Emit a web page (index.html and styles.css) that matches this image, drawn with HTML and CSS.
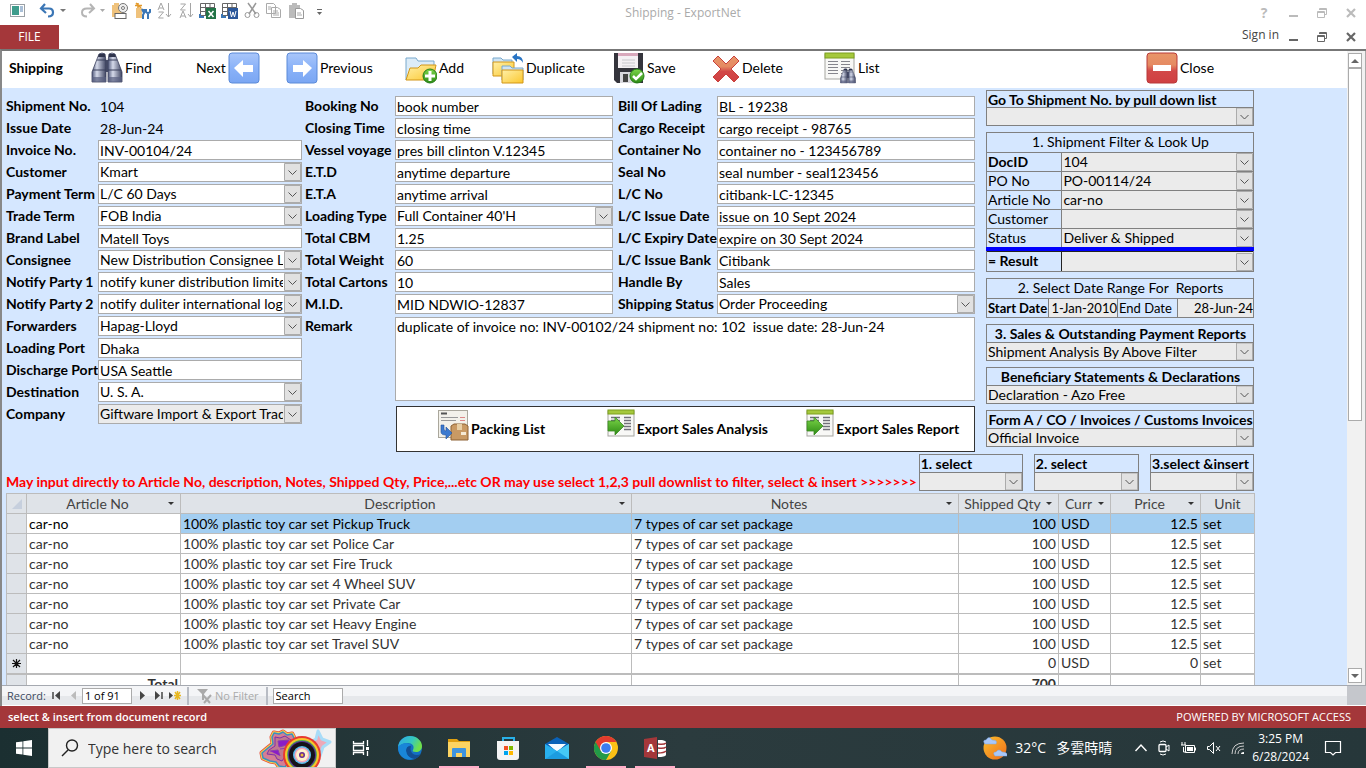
FILE: index.html
```html
<!DOCTYPE html>
<html lang="en">
<head>
<meta charset="utf-8">
<title>Shipping - ExportNet</title>
<link rel="stylesheet" href="styles.css">
</head>
<body>
<svg class="defs" aria-hidden="true">
  <defs>
    <linearGradient id="blue" x1="0" y1="0" x2="0" y2="1"><stop offset="0" stop-color="#a9c6fa"/><stop offset=".5" stop-color="#8ab2f8"/><stop offset="1" stop-color="#7aa6f3"/></linearGradient>
    <linearGradient id="red" x1="0" y1="0" x2="0" y2="1"><stop offset="0" stop-color="#e8966a"/><stop offset=".4" stop-color="#e58a62"/><stop offset=".6" stop-color="#d24848"/><stop offset="1" stop-color="#d04042"/></linearGradient>
    <linearGradient id="gold" x1="0" y1="0" x2="1" y2="1"><stop offset="0" stop-color="#fff0a8"/><stop offset="1" stop-color="#fbc72e"/></linearGradient>
    <linearGradient id="steel" x1="0" y1="0" x2="1" y2="0"><stop offset="0" stop-color="#50587a"/><stop offset=".35" stop-color="#d5daea"/><stop offset="1" stop-color="#3f4562"/></linearGradient>
    <linearGradient id="green" x1="0" y1="0" x2="0" y2="1"><stop offset="0" stop-color="#7dd64a"/><stop offset="1" stop-color="#2c8a14"/></linearGradient>
    <linearGradient id="sun" x1="0" y1="0" x2="1" y2="1"><stop offset="0" stop-color="#fbc02d"/><stop offset="1" stop-color="#ef6c1a"/></linearGradient>
    <linearGradient id="edge" x1="0" y1="0" x2="1" y2=".4"><stop offset="0" stop-color="#2fa8e8"/><stop offset=".6" stop-color="#35c8c0"/><stop offset="1" stop-color="#6fe04a"/></linearGradient>
    <symbol id="binoculars" viewBox="0 0 32 32">
      <rect x="13" y="8" width="6" height="12" fill="#4a506c"/>
      <path d="M8 2q3-2 6 0l1 7v21H1V20L6 7z" fill="url(#steel)" stroke="#3b405c" stroke-width=".8"/>
      <path d="M18 2q3-2 6 0l2 5 5 13v10H17V9z" fill="url(#steel)" stroke="#3b405c" stroke-width=".8"/>
      <path d="M8 2h6v3H7zM18 2h6l1 3h-7z" fill="#2f344c"/>
      <path d="M6 8h9M17 8h9M2 18h13M17 18h13" stroke="#3b405c"/>
      <path d="M1 25h14v5H1zM17 25h14v5H17z" fill="#596080" opacity=".7"/>
    </symbol>
    <symbol id="sheet" viewBox="0 0 32 32">
      <rect x="1" y="2" width="29" height="25" fill="#f8f8f6" stroke="#a5a5a0"/>
      <rect x="1" y="1" width="29" height="5" fill="#a5c83c" stroke="#7da01e"/>
      <path d="M4 9.500h10M4 12.500h10M4 15.500h10M4 18.500h10M4 21.500h10M17 9.500h9M17 12.500h9M17 15.500h9M17 18.500h9M17 21.500h9" stroke="#85858c"/>
    </symbol>
    <symbol id="export" viewBox="0 0 32 32">
      <rect x="3" y="2" width="26" height="25" fill="#f8f8f6" stroke="#a5a5a0"/>
      <rect x="3" y="1" width="26" height="4" fill="#a5c83c" stroke="#7da01e"/>
      <path d="M6 8.500h9M6 11.500h9M19 8.500h7M19 11.500h7M19 14.500h7M19 17.500h7M19 20.500h7" stroke="#70707a" stroke-width="1.500"/>
      <path d="M3 12h7V8l9 9-9 9v-4H3z" fill="url(#green)" stroke="#3a8a22" stroke-width=".8"/>
    </symbol>
    <symbol id="restore" viewBox="0 0 12 12"><path d="M3.500 3V1.500h7v6H9M1.500 4.500h7v6h-7zM1.500 5.500h7M3.500 2.500h7" fill="none" stroke="currentColor"/></symbol>
    <symbol id="cross" viewBox="0 0 12 12"><path d="M2 2l8 8M10 2l-8 8" stroke="currentColor" stroke-width="2.200"/></symbol>
  </defs>
</svg>

<header class="titlebar">
  <div class="quick">
    <svg width="17" height="22" viewBox="0 0 17 22"><rect x="1.500" y="4.500" width="14" height="12" fill="#fff" stroke="#9aa0a5"/><rect x="3" y="6" width="7" height="9" fill="#3f9c8c"/><path d="M11 7h3M11 9h3M11 11h3" stroke="#5580b0"/></svg>
    <svg class="q-undo" width="30" height="22" viewBox="0 0 30 22"><path d="M7 4L3 8.500l5 4.500M4 8.500h7q4 0 4 4t-5 4" fill="none" stroke="#3b76b5" stroke-width="2.200"/><path d="M22 9h6l-3 3z" fill="#777"/></svg>
    <svg class="q-redo" width="28" height="22" viewBox="0 0 28 22"><path d="M8 4l4 4.500L7 13M11 8.500H5q-5 0-5 4t5 4" transform="translate(1)" fill="none" stroke="#b5b5b5" stroke-width="2"/><path d="M19 9h5l-2.500 3z" fill="#aaa"/></svg>
    <svg width="22" height="22" viewBox="0 0 22 22"><path d="M3 3h5v3H3zM1 5h11v12H1z" fill="#efc27c"/><circle cx="12" cy="8" r="4.500" fill="#eee" stroke="#777"/><circle cx="12" cy="8" r="1.500" fill="#fff" stroke="#777"/><rect x="4" y="13.500" width="11" height="5" fill="#fff" stroke="#666"/></svg>
    <svg width="22" height="22" viewBox="0 0 22 22"><path d="M5 3v5M2 5.500h7M3 3l5 5" stroke="#e39a2c" stroke-width="1.500"/><rect x="3" y="8" width="6" height="10" fill="#efc27c"/><path d="M11 9v4l-1 2v4M9 9l2 4M13 9v3q2 2 4 0V9M15 13v6" fill="none" stroke="#3b76b5" stroke-width="2"/></svg>
    <svg width="22" height="22" viewBox="0 0 22 22"><path d="M3 10l3-7 3 7M4 8h4M3.500 12h5l-5 6h5M13.500 3v14M11 14l2.500 3 2.500-3" fill="none" stroke="#a5a5a5"/></svg>
    <svg width="22" height="22" viewBox="0 0 22 22"><path d="M3.500 4h5l-5 6h5M3 18l3-7 3 7M4 16h4M13.500 3v14M11 14l2.500 3 2.500-3" fill="none" stroke="#a5a5a5"/></svg>
    <svg width="22" height="22" viewBox="0 0 22 22"><path d="M1.500 3.500h14v12h-14zM2 7.500h14M6.500 4v11M11 4v11M2 11.500h13" fill="#fff" stroke="#666"/><rect x="7" y="8" width="10" height="11" fill="#217346"/><path d="M9.500 11l5 6M14.500 11l-5 6" stroke="#fff" stroke-width="1.500"/><path d="M1 14v3h4" fill="none" stroke="#3b76b5" stroke-width="2"/></svg>
    <svg width="22" height="22" viewBox="0 0 22 22"><path d="M1.500 3.500h14v12h-14zM2 7.500h14M6.500 4v11M11 4v11M2 11.500h13" fill="#fff" stroke="#666"/><rect x="7" y="8" width="10" height="11" fill="#2b579a"/><path d="M9 11l1.500 6 1.500-5 1.500 5 1.500-6" fill="none" stroke="#fff"/><path d="M1 14v3h4" fill="none" stroke="#3b76b5" stroke-width="2"/></svg>
    <svg width="22" height="22" viewBox="0 0 22 22"><path d="M5 3l8 11M13 3L6 14" stroke="#999" stroke-width="1.500"/><circle cx="4.500" cy="15" r="2.500" fill="none" stroke="#999"/><circle cx="13.500" cy="15" r="2.500" fill="none" stroke="#999"/></svg>
    <svg width="22" height="22" viewBox="0 0 22 22"><path d="M1.500 3.500h7l2 2v8h-9zM6.500 7.500h6l3 2v8h-9zM3 7h3M3 9h3M8 11h5M8 13h6M8 15h6" fill="#fff" stroke="#aaa"/></svg>
    <svg width="22" height="22" viewBox="0 0 22 22"><path d="M2 5h11v13H2zM5 3h5v3H5z" fill="#bbb"/><path d="M8.500 8.500h5l3 2v8h-8z" fill="#fff" stroke="#999"/><path d="M10 13h4M10 15h5" stroke="#aaa"/></svg>
    <svg width="22" height="22" viewBox="0 0 22 22"><path d="M8 9.500h5" stroke="#666"/><path d="M8 12h5l-2.500 3z" fill="#666"/></svg>
  </div>
  <h1>Shipping - ExportNet</h1>
  <div class="winctl faded">
    <button aria-label="Help">?</button>
    <button aria-label="Minimize"><i class="dash"></i></button>
    <button aria-label="Restore"><svg width="12" height="12"><use href="#restore"/></svg></button>
    <button aria-label="Close"><svg width="12" height="12"><use href="#cross"/></svg></button>
  </div>
</header>
<nav class="ribbon">
  <button class="file">FILE</button>
  <a class="signin" href="#">Sign in</a>
  <div class="winctl">
    <button aria-label="Minimize form"><i class="dash"></i></button>
    <button aria-label="Restore form"><svg width="12" height="12"><use href="#restore"/></svg></button>
    <button aria-label="Close form"><svg width="12" height="12"><use href="#cross"/></svg></button>
  </div>
</nav>

<main class="window">
  <div class="workspace">
    <div class="formview">
      <div class="toolbar">
        <h2>Shipping</h2>
        <button><svg width="32" height="32"><use href="#binoculars"/></svg>Find</button>
        <button>Next<svg width="32" height="32" viewBox="0 0 32 32"><rect x="1" y="1" width="30" height="30" rx="3" fill="url(#blue)" stroke="#5b8ad8"/><path d="M6 16l9-8v5h10v7H15v5z" fill="#fff"/></svg></button>
        <button><svg width="32" height="32" viewBox="0 0 32 32"><rect x="1" y="1" width="30" height="30" rx="3" fill="url(#blue)" stroke="#5b8ad8"/><path d="M26 16l-9-8v5H7v7h10v5z" fill="#fff"/></svg>Previous</button>
        <button><svg width="32" height="32" viewBox="0 0 32 32"><path d="M1 28V6h10l2 3h16v6" fill="#dcecf8" stroke="#78a8cc"/><path d="M1 28l4-12h8l3-3h15l-3 15z" fill="url(#gold)" stroke="#d29618"/><circle cx="25" cy="24" r="7" fill="url(#green)" stroke="#267d18"/><path d="M25 19v10M20 24h10" stroke="#fff" stroke-width="3"/></svg>Add</button>
        <button><svg width="32" height="32" viewBox="0 0 32 32"><path d="M1 22V6h8l2 2h9v14z" fill="#cfe4f4" stroke="#78a8cc"/><path d="M1 24V10h21v14z" fill="url(#gold)" stroke="#d29618"/><path d="M10 28V14h8l2 2h11v12z" fill="#cfe4f4" stroke="#78a8cc"/><path d="M10 31V18h21v13z" fill="url(#gold)" stroke="#d29618"/><path d="M31 11q0-7-6-7V1l-5 4 5 5V7q4 0 6 4z" fill="#2874c4"/></svg>Duplicate</button>
        <button><svg width="32" height="32" viewBox="0 0 32 32"><path d="M1 1h29v30H4l-3-3z" fill="#34343c"/><path d="M5 1h20v15H5z" fill="#f4f0f4"/><path d="M5 1h20v3H5z" fill="#d8a8bc"/><path d="M9 8h13M9 11h13M9 14h13" stroke="#c8c8cc"/><path d="M7 20h15v11H7z" fill="#d8d8de"/><path d="M10 22h5v8h-5z" fill="#444"/><circle cx="24" cy="24" r="7" fill="url(#green)" stroke="#267d18"/><path d="M20 24l3 3 6-6" fill="none" stroke="#fff" stroke-width="2.500"/></svg>Save</button>
        <button><svg width="28" height="32" viewBox="0 0 28 32"><path d="M6 4l8 8 8-8 5 5-8 8 8 8-5 5-8-8-8 8-5-5 8-8-8-8z" fill="url(#red)" stroke="#c9403c"/></svg>Delete</button>
        <button><svg width="32" height="32" viewBox="0 0 32 32"><use href="#sheet" width="32" height="32"/><use href="#binoculars" x="16" y="16" width="16" height="16"/></svg>List</button>
        <button><svg width="32" height="32" viewBox="0 0 32 32"><rect x="1" y="1" width="30" height="30" rx="3" fill="url(#red)" stroke="#b83838"/><path d="M7 13h18v6H7z" fill="#fff"/></svg>Close</button>
      </div>

      <div class="form">
        <div class="upper">
          <section class="fields general">
            <label for="g1">Shipment No.</label><input id="g1" class="plain" value="104">
            <label for="g2">Issue Date</label><input id="g2" class="plain" value="28-Jun-24">
            <label for="g3">Invoice No.</label><input id="g3" value="INV-00104/24">
            <label for="g4">Customer</label><select id="g4"><option>Kmart</option></select>
            <label for="g5">Payment Term</label><select id="g5"><option>L/C 60 Days</option></select>
            <label for="g6">Trade Term</label><select id="g6"><option>FOB India</option></select>
            <label for="g7">Brand Label</label><input id="g7" value="Matell Toys">
            <label for="g8">Consignee</label><select id="g8"><option>New Distribution Consignee Limited</option></select>
            <label for="g9">Notify Party 1</label><select id="g9"><option>notify kuner distribution limited</option></select>
            <label for="g10">Notify Party 2</label><select id="g10"><option>notify duliter international logistics</option></select>
            <label for="g11">Forwarders</label><select id="g11"><option>Hapag-Lloyd</option></select>
            <label for="g12">Loading Port</label><input id="g12" value="Dhaka">
            <label for="g13">Discharge Port</label><input id="g13" value="USA Seattle">
            <label for="g14">Destination</label><select id="g14"><option>U. S. A.</option></select>
            <label for="g15">Company</label><select id="g15" class="grey"><option>Giftware Import &amp; Export Trading</option></select>
          </section>

          <section class="details">
            <div class="fields voyage">
              <label for="v1">Booking No</label><input id="v1" value="book number">
              <label for="v2">Closing Time</label><input id="v2" value="closing time">
              <label for="v3">Vessel voyage</label><input id="v3" value="pres bill clinton V.12345">
              <label for="v4">E.T.D</label><input id="v4" value="anytime departure">
              <label for="v5">E.T.A</label><input id="v5" value="anytime arrival">
              <label for="v6">Loading Type</label><select id="v6"><option>Full Container 40'H</option></select>
              <label for="v7">Total CBM</label><input id="v7" value="1.25">
              <label for="v8">Total Weight</label><input id="v8" value="60">
              <label for="v9">Total Cartons</label><input id="v9" value="10">
              <label for="v10">M.I.D.</label><input id="v10" value="MID NDWIO-12837">
            </div>
            <div class="fields cargo">
              <label for="c1">Bill Of Lading</label><input id="c1" value="BL - 19238">
              <label for="c2">Cargo Receipt</label><input id="c2" value="cargo receipt - 98765">
              <label for="c3">Container No</label><input id="c3" value="container no - 123456789">
              <label for="c4">Seal No</label><input id="c4" value="seal number - seal123456">
              <label for="c5">L/C No</label><input id="c5" value="citibank-LC-12345">
              <label for="c6">L/C Issue Date</label><input id="c6" value="issue on 10 Sept 2024">
              <label for="c7">L/C Expiry Date</label><input id="c7" value="expire on 30 Sept 2024">
              <label for="c8">L/C Issue Bank</label><input id="c8" value="Citibank">
              <label for="c9">Handle By</label><input id="c9" value="Sales">
              <label for="c10">Shipping Status</label><select id="c10"><option>Order Proceeding</option></select>
            </div>
            <div class="remark">
              <label for="remark">Remark</label>
              <textarea id="remark">duplicate of invoice no: INV-00102/24 shipment no: 102  issue date: 28-Jun-24</textarea>
            </div>
            <div class="actions">
              <button><svg width="34" height="32" viewBox="0 0 34 32"><rect x="1.500" y="1.500" width="29" height="27" fill="#f3f1ea" stroke="#aaa79c"/><path d="M4 4.500h6" stroke="#555" stroke-width="2"/><path d="M4 8.500h17M4 11.500h15" stroke="#999"/><path d="M23 8.500h5M23 11.500h5" stroke="#d88"/><path d="M14 17l3-2h11l3 2v14H14z" fill="#c99a64" stroke="#8d6234"/><path d="M20 15h5v6h-5z" fill="#e8cfa5"/><path d="M24 23h5v3h-5z" fill="#f6ead4"/><path d="M4 16v7q0 3 5 3v4l6-6-6-6v4q-2 0-2-2v-4z" fill="#3c7ad0" stroke="#24539a" stroke-width=".6"/></svg>Packing List</button>
              <button><svg width="32" height="32"><use href="#export"/></svg>Export Sales Analysis</button>
              <button><svg width="32" height="32"><use href="#export"/></svg>Export Sales Report</button>
            </div>
          </section>

          <aside class="lookup">
            <div class="box goto"><label for="go">Go To Shipment No. by pull down list</label><select id="go"></select></div>
            <div class="box filter">
              <h3>1. Shipment Filter &amp; Look Up</h3>
              <label class="bold" for="f1">DocID</label><select id="f1"><option>104</option></select>
              <label for="f2">PO No</label><select id="f2"><option>PO-00114/24</option></select>
              <label for="f3">Article No</label><select id="f3"><option>car-no</option></select>
              <label for="f4">Customer</label><select id="f4"></select>
              <label for="f5">Status</label><select id="f5"><option>Deliver &amp; Shipped</option></select>
              <div class="rule"></div>
              <label class="bold result" for="f6">= Result</label><select class="result" id="f6"></select>
            </div>
            <div class="box dates">
              <h3>2. Select Date Range For&nbsp; Reports</h3>
              <label class="bold" for="d1">Start Date</label><input id="d1" value="1-Jan-2010">
              <label for="d2">End Date</label><input id="d2" value="28-Jun-24">
            </div>
            <div class="box report"><label for="r1">3. Sales &amp; Outstanding Payment Reports</label><select id="r1"><option>Shipment Analysis By Above Filter</option></select></div>
            <div class="box report"><label for="r2">Beneficiary Statements &amp; Declarations</label><select id="r2"><option>Declaration - Azo Free</option></select></div>
            <div class="box report"><label for="r3">Form A / CO / Invoices / Customs Invoices</label><select id="r3"><option>Official Invoice</option></select></div>
          </aside>
        </div>

        <div class="picker">
          <p>May input directly to Article No, description, Notes, Shipped Qty, Price,...etc OR may use select 1,2,3 pull downlist to filter, select &amp; insert &gt;&gt;&gt;&gt;&gt;&gt;&gt;</p>
          <div class="box pick"><label for="s1">1. select</label><select id="s1"></select></div>
          <div class="box pick"><label for="s2">2. select</label><select id="s2"></select></div>
          <div class="box pick"><label for="s3">3.select &amp;insert</label><select id="s3"></select></div>
        </div>

        <table class="items">
          <colgroup><col class="c-sel"><col class="c-art"><col class="c-desc"><col class="c-note"><col class="c-qty"><col class="c-cur"><col class="c-price"><col class="c-unit"></colgroup>
          <thead>
            <tr><th><svg width="12" height="12" viewBox="0 0 12 12"><path d="M11 1v10H1z" fill="#c6cfdd"/></svg></th><th class="drop">Article No</th><th class="drop">Description</th><th class="drop">Notes</th><th class="drop">Shipped Qty</th><th class="drop">Curr</th><th class="drop">Price</th><th>Unit</th></tr>
          </thead>
          <tbody>
            <tr class="current"><th></th><td>car-no</td><td>100% plastic toy car set Pickup Truck</td><td>7 types of car set package</td><td class="num">100</td><td>USD</td><td class="num">12.5</td><td>set</td></tr>
            <tr><th></th><td>car-no</td><td>100% plastic toy car set Police Car</td><td>7 types of car set package</td><td class="num">100</td><td>USD</td><td class="num">12.5</td><td>set</td></tr>
            <tr><th></th><td>car-no</td><td>100% plastic toy car set Fire Truck</td><td>7 types of car set package</td><td class="num">100</td><td>USD</td><td class="num">12.5</td><td>set</td></tr>
            <tr><th></th><td>car-no</td><td>100% plastic toy car set 4 Wheel SUV</td><td>7 types of car set package</td><td class="num">100</td><td>USD</td><td class="num">12.5</td><td>set</td></tr>
            <tr><th></th><td>car-no</td><td>100% plastic toy car set Private Car</td><td>7 types of car set package</td><td class="num">100</td><td>USD</td><td class="num">12.5</td><td>set</td></tr>
            <tr><th></th><td>car-no</td><td>100% plastic toy car set Heavy Engine</td><td>7 types of car set package</td><td class="num">100</td><td>USD</td><td class="num">12.5</td><td>set</td></tr>
            <tr><th></th><td>car-no</td><td>100% plastic toy car set Travel SUV</td><td>7 types of car set package</td><td class="num">100</td><td>USD</td><td class="num">12.5</td><td>set</td></tr>
            <tr class="new"><th><svg width="11" height="11" viewBox="0 0 11 11"><path d="M5.500 1v9M1 5.500h9M2 2l7 7M9 2L2 9" stroke="#111" stroke-width="1.200"/></svg></th><td></td><td></td><td></td><td class="num">0</td><td>USD</td><td class="num">0</td><td>set</td></tr>
          </tbody>
          <tfoot>
            <tr><th></th><td class="num">Total</td><td></td><td></td><td class="num">700</td><td></td><td></td><td></td></tr>
          </tfoot>
        </table>
      </div>
    </div>
    <div class="scrollbar" aria-hidden="true">
      <span class="arrow up"></span><span class="thumb"></span><span class="arrow down"></span>
    </div>
  </div>
  <div class="records">
    <span>Record:</span>
    <button aria-label="First"><svg width="11" height="9" viewBox="0 0 11 9"><path d="M2 1v7" stroke="#444" stroke-width="1.500"/><path d="M9 0v9L4 4.500z" fill="#444"/></svg></button>
    <button class="r-prev" aria-label="Previous record"><svg width="8" height="9" viewBox="0 0 8 9"><path d="M6 0v9L1 4.500z" fill="#bbb"/></svg></button>
    <input class="pos" aria-label="Current record" value="1 of 91">
    <button class="r-next" aria-label="Next record"><svg width="8" height="9" viewBox="0 0 8 9"><path d="M2 0v9l5-4.500z" fill="#444"/></svg></button>
    <button aria-label="Last"><svg width="11" height="9" viewBox="0 0 11 9"><path d="M8 1v7" stroke="#444" stroke-width="1.500"/><path d="M1 0v9l5-4.500z" fill="#444"/></svg></button>
    <button class="r-new" aria-label="New record"><svg width="13" height="9" viewBox="0 0 13 9"><path d="M0 1v7l4-3.500z" fill="#444"/><path d="M8.500 0v9M5 4.500h7M6 1l5 7M11 1L6 8" stroke="#e8b820" stroke-width="1.500"/></svg></button>
    <i class="sep"></i>
    <button class="nofilter" disabled><svg width="17" height="16" viewBox="0 0 17 16"><path d="M1 1h11L8 6v6H6V6z" fill="#aaa"/><path d="M7 7l7 8M15 7l-7 8" stroke="#aaa" stroke-width="2"/></svg>No Filter</button>
    <i class="sep"></i>
    <input class="find" aria-label="Search records" value="Search">
    <i class="corner"></i>
  </div>
</main>

<footer class="status"><span>select &amp; insert from document record</span><span>POWERED BY MICROSOFT ACCESS</span></footer>

<div class="taskbar">
  <button class="start" aria-label="Start"><svg width="16" height="16" viewBox="0 0 16 16"><path d="M0 2.300l6.500-.9v6.200H0zM7.300 1.300L16 0v7.600H7.300zM0 8.400h6.500v6.200L0 13.700zM7.300 8.400H16V16l-8.700-1.300z" fill="#fff"/></svg></button>
  <div class="search">
    <svg width="18" height="18" viewBox="0 0 18 18"><circle cx="11" cy="6.500" r="5.500" fill="none" stroke="#222" stroke-width="1.400"/><path d="M7 11l-6 6" stroke="#222" stroke-width="1.400"/></svg>
    <input aria-label="Search" value="Type here to search">
    <svg class="doodle" width="74" height="38" viewBox="0 0 74 38">
      <g stroke-linejoin="round">
        <path d="M14 8l2-4 5 1 4-2 4 3 5-1 3 6 6 2-1 6 4 5-7 4-4 6-5 0-3 4-6-1-3-4-6-1-7-3-1-5 6-5 5-4z" fill="#b060c0" stroke="#e8503c" stroke-width="5"/>
        <path d="M14 8l2-4 5 1 4-2 4 3 5-1 3 6 6 2-1 6 4 5-7 4-4 6-5 0-3 4-6-1-3-4-6-1-7-3-1-5 6-5 5-4z" fill="#9a58b0" stroke="#f6d24a" stroke-width="3.500"/>
        <path d="M14 8l2-4 5 1 4-2 4 3 5-1 3 6 6 2-1 6 4 5-7 4-4 6-5 0-3 4-6-1-3-4-6-1-7-3-1-5 6-5 5-4z" fill="#d47e94" stroke="#3a8fc0" stroke-width="1.500"/>
        <path d="M17 8l5 1 5-2 6 4-1 8 4 4-8 3-4 6-5-2-2-4-8-1 2-4 6-4z" fill="#c07890" stroke="#7d2fa8"/>
        <path d="M20 12l11-1-2 5-8 2zM22 20l8-1M12 22l8-1 2 6" fill="#8a1cc8" stroke="#8a3cb0"/>
        <path d="M60 2l4 8 8 3-7 5-3 9-4-8-7-5 7-4z" fill="#eea8b8" stroke="#a8dcf8" stroke-width="3"/>
      </g>
      <circle cx="44" cy="26" r="19" fill="#e83a32"/><circle cx="44" cy="26" r="17" fill="#f8c52c"/><circle cx="44" cy="26" r="15" fill="#4ab050"/><circle cx="44" cy="26" r="14" fill="#5b2a98"/><circle cx="44" cy="26" r="13" fill="#141318"/><circle cx="44" cy="26" r="9" fill="#5abced"/><circle cx="44" cy="26" r="7.500" fill="#f4a8bc"/><circle cx="44" cy="26" r="6" fill="#fff2cc"/><circle cx="44" cy="26" r="3" fill="#6a2a94"/><circle cx="44" cy="26" r="1.500" fill="#f0c030"/>
    </svg>
  </div>
  <div class="apps">
    <button aria-label="Task View"><svg width="18" height="18" viewBox="0 0 18 18"><path d="M1.500 2v2.500h10V2M1.500 16v-2.500h10V16M1.500 6.500h10v5h-10zM15.500 1v6M15.500 12v5" fill="none" stroke="#fff" stroke-width="1.300"/><path d="M14 8h3v3h-3z" fill="#fff"/></svg></button>
    <button aria-label="Edge"><svg width="24" height="24" viewBox="0 0 24 24"><circle cx="12" cy="12" r="12" fill="#1471c4"/><path d="M0 11C1 4 6 0 12 0c7 0 12 5 12 10 0 4-3 6-6 6-3 0-4-1-3-2 2-4-1-7-5-7C5 7 2 9 0 11z" fill="url(#edge)"/><path d="M8 14q0 8 9 9 4-2 6-5c-4 2-9 1-10-3q-1-2 0-5-5 0-5 4z" fill="#124f94"/><path d="M0 11c3-4 9-5 13-2q-5 1-5 6 1 6 7 8C7 25 0 20 0 11z" fill="#1986d8"/></svg></button>
    <button class="open" aria-label="File Explorer"><svg width="24" height="24" viewBox="0 0 24 24"><path d="M1 3h9l2 2h11v16H1z" fill="#e0a010"/><path d="M1 6h22v15H1z" fill="#fcd462"/><path d="M5 21v-8q0-1 1-1h12q1 0 1 1v8h-4v-4H9v4z" fill="#3e94de"/></svg></button>
    <button aria-label="Store"><svg width="24" height="24" viewBox="0 0 24 24"><path d="M7 5V2h11v3" fill="none" stroke="#28b0e8" stroke-width="2"/><path d="M1 5h22v16q0 3-3 3H4q-3 0-3-3z" fill="#f4f4f4"/><path d="M8 10h4v4H8z" fill="#f25022"/><path d="M13 10h4v4h-4z" fill="#7fba00"/><path d="M8 15h4v4H8z" fill="#00a4ef"/><path d="M13 15h4v4h-4z" fill="#ffb900"/></svg></button>
    <button aria-label="Mail"><svg width="24" height="24" viewBox="0 0 24 24"><path d="M0 8l12-7 12 7v6H0z" fill="#0a62b8"/><path d="M3 8h18l-9 8z" fill="#f6fbff"/><path d="M0 8l12 7 12-7v15H0z" fill="#28b0ee"/><path d="M24 8L0 23h24z" fill="#45c8f5"/><path d="M0 23l12-8 12 8z" fill="#1c9ce0"/></svg></button>
    <button class="open" aria-label="Chrome"><svg width="24" height="24" viewBox="0 0 24 24"><circle cx="12" cy="12" r="12" fill="#fbc116"/><path d="M1.600 6A12 12 0 0 0 12 24l5.200-9L12 12z" fill="#229a48"/><path d="M1.600 6A12 12 0 0 1 22.400 6H12L6.800 15z" fill="#e33b2e"/><circle cx="12" cy="12" r="6" fill="#fff"/><circle cx="12" cy="12" r="4.800" fill="#3c7cf0"/></svg></button>
    <button class="open" aria-label="Access"><svg width="24" height="24" viewBox="0 0 24 24"><path d="M1 3l13-2v22L1 21z" fill="#a4373a"/><path d="M15 4h4q4 1 4 2v13q-1 2-8 2z" fill="#fff"/><path d="M15 8q6 1 8-1M15 12q6 1 8-1M15 17q6 0 8-2" fill="none" stroke="#a4373a" stroke-width="1.500"/><text class="a" x="4" y="16">A</text></svg></button>
  </div>
  <div class="tray">
    <svg width="24" height="24" viewBox="0 0 24 24"><circle cx="12" cy="12" r="11.500" fill="url(#sun)"/><path d="M2 8q-3-4 1-4 3-5 6 0 6 0 4 4zM12 20q-3-4 1-4 3-4 6 0 6 0 5 4z" fill="#a9c8f8" stroke="#7ea8ea" stroke-width=".5"/></svg>
    <span class="weather">32°C</span><span class="weather cjk">多雲時晴</span>
    <div class="indicators">
      <svg width="14" height="18" viewBox="0 0 14 18"><path d="M1.500 12L7 6l5.500 6" fill="none" stroke="#fff" stroke-width="1.400"/></svg>
      <svg width="14" height="18" viewBox="0 0 14 18"><rect x="2" y="5.500" width="7" height="7" rx="1" fill="none" stroke="#fff" stroke-width="1.300"/><path d="M9 8l3-2v6l-3-2M3 3q3-2 6 0M3 15q3 2 6 0" fill="none" stroke="#fff"/></svg>
      <svg width="17" height="18" viewBox="0 0 17 18"><path d="M5.500 6.500h9v7h-9zM15.500 8.500v3M2 3v3M5 3v3M1 6h5M3.500 8v5h3" fill="none" stroke="#fff"/><path d="M7 8h6v4H7z" fill="#fff"/></svg>
      <svg width="16" height="18" viewBox="0 0 16 18"><path d="M1.500 7.500h2l4-4v11l-4-4h-2zM10 7l4 5M14 7l-4 5" fill="none" stroke="#fff"/></svg>
      <svg width="15" height="18" viewBox="0 0 15 18"><path d="M1 15Q1 4 13 4M4 15q0-8 9-8M7 15q0-5 6-5" fill="none" stroke="#ccc"/><path d="M10 15q0-2 3-2v2z" fill="#fff"/></svg>
    </div>
    <div class="clock"><span>3:25 PM</span><span>6/28/2024</span></div>
    <button class="notes" aria-label="Notifications"><svg width="18" height="18" viewBox="0 0 18 18"><path d="M1.500 2.500h15v11h-5L9 16l-2.500-2.500h-5z" fill="none" stroke="#fff" stroke-width="1.200"/></svg></button>
  </div>
</div>
</body>
</html>
```

FILE: styles.css
```css
* { box-sizing: border-box; }
body {
  margin: 0;
  height: 100vh;
  display: flex;
  flex-direction: column;
  overflow: hidden;
  background: #fff;
  color: #000;
  font: 14px/18px Lato, "Open Sans", sans-serif;
}
button, input, select, textarea { font: inherit; color: inherit; margin: 0; }
button { background: none; border: 0; padding: 0; display: flex; align-items: center; }
h1, h2, h3, p { margin: 0; font: inherit; }
svg { flex: none; display: block; }
.defs { position: absolute; width: 0; height: 0; }

/* window chrome */
.titlebar { display: grid; grid-template-columns: 1fr auto 1fr; height: 25px; flex: none; }
.quick { display: flex; padding-left: 9px; }
.q-undo { margin: 0 13px 0 12px; }
.q-redo { margin-right: 2px; }
.titlebar h1 { font: 12px/25px "Open Sans", sans-serif; color: #aaa; }
.winctl { display: flex; align-items: center; justify-content: flex-end; gap: 17px; padding-right: 9px; color: #666; }
.winctl button { width: 12px; justify-content: center; }
.winctl.faded { color: #bbb; font: bold 14px "Open Sans", sans-serif; }
.dash { width: 9px; height: 2px; margin-top: 6px; background: currentColor; }
.ribbon { display: flex; height: 24px; flex: none; font: 12px/24px "Open Sans", sans-serif; }
.file { width: 59px; justify-content: center; background: #a4373a; color: #fff; }
.signin { margin: 0 8px 0 auto; line-height: 20px; color: #444; text-decoration: none; }

.window { flex: 1; min-height: 0; display: flex; flex-direction: column; border-top: 2px solid #777; border-left: 2px solid #888; }
.workspace { flex: 1; min-height: 0; display: flex; }
.formview { flex: 1; min-width: 0; overflow: hidden; background: #d5e7ff; }

/* command row */
.toolbar {
  display: grid;
  grid-template-columns: 85fr 105fr 90fr 119fr 87fr 121fr 99fr 112fr 322fr 201fr;
  height: 37px;
  padding: 0 0 3px 4px;
  background: #fff;
}
.toolbar button, .toolbar h2 { display: flex; align-items: center; gap: 2px; white-space: nowrap; }
.toolbar h2 { padding-left: 3px; font-weight: bold; }

/* form body */
.form { padding: 2px 93px 0 4px; }
.upper { display: grid; grid-template-columns: 296fr 670fr 276fr; column-gap: 3px; }
.fields { display: grid; grid-auto-rows: 22px; align-content: start; align-items: center; }
.general, .details { padding-top: 5px; }
.general { grid-template-columns: 91fr 205fr; }
.details { display: grid; grid-template-columns: 308fr 357fr; column-gap: 5px; align-content: start; }
.voyage { grid-template-columns: 90fr 218fr; }
.cargo { grid-template-columns: 99fr 258fr; }
.fields label, .remark label, .bold, .report label, .goto label, .pick label { font-weight: bold; white-space: nowrap; }
input, select, textarea {
  width: 100%;
  height: 20px;
  padding: 0 0 0 1px;
  border: 1px solid #ababab;
  border-radius: 0;
  background-color: #fff;
  min-width: 0;
}
select {
  appearance: none;
  padding-right: 18px;
  text-overflow: clip;
  background-image: url("data:image/svg+xml,%3Csvg xmlns='http://www.w3.org/2000/svg' width='17' height='18'%3E%3Cpath d='M.5 .5h16v17H.5z' fill='%23e1e1e1' stroke='%23ababab'/%3E%3Cpath d='M4.500 7.500l4 4 4-4' fill='none' stroke='%23555'/%3E%3C/svg%3E");
  background-repeat: no-repeat;
  background-position: right center;
}
input.plain { border-color: transparent; background: none; }
select.grey { background-color: #ebebeb; }
.remark { grid-column: 1 / -1; display: grid; grid-template-columns: 90fr 580fr; margin-top: 2px; }
.remark textarea { display: block; height: 84px; line-height: 18px; resize: none; }
.actions { grid-column: 1 / -1; display: grid; grid-template-columns: 168fr 200fr 170fr; height: 46px; margin: 5px 0 0 91px; padding-left: 40px; border: 1px solid #333; background: #fff; }
.actions button { font-weight: bold; white-space: nowrap; align-items: flex-end; padding-bottom: 10px; line-height: 24px; }

/* look-up panels */
.lookup { display: flex; flex-direction: column; gap: 6px; margin-left: 8px; }
.box { display: grid; border: 1px solid #808080; }
.box label, .box h3 { height: 17px; line-height: 18px; padding-left: 1px; overflow: hidden; white-space: nowrap; }
.goto label { height: 16px; }
.box h3 { grid-column: 1 / -1; height: 19px; text-align: center; }
.box input, .box select { background-color: #ebebeb; border: 0; height: 18px; border-top: 1px solid #808080; }
.filter { grid-template-columns: 75fr 193fr; }
.box.filter label, .box.dates label { height: 19px; line-height: 18px; border-top: 1px solid #808080; }
.box.filter select, .box.dates input { height: 19px; }
.box.filter select { border-left: 1px solid #808080; }
.rule { grid-column: 1 / -1; height: 4px; margin: 0 -1px; background: #00f; }
.box.filter .result { height: 20px; border-color: #222; }
.dates { grid-template-columns: 61fr 70fr 59fr 76fr; }
.dates label, .dates input { font-size: 13px; }
.box.dates input { padding: 0; text-align: right; border-left: 1px solid #808080; border-right: 1px solid #808080; }
.box.dates input:last-child { border-right: 0; }
.report label { text-align: center; }
.picker { display: grid; grid-template-columns: 901fr 104fr 105fr 104fr; column-gap: 11px; margin-top: 2px; }
.picker p { align-self: end; min-width: 0; color: #f00; font-weight: bold; white-space: nowrap; }

/* line items */
.items { width: 100%; margin-top: 2px; border-collapse: collapse; table-layout: fixed; background: #fff; color: #333; }
.items th, .items td { height: 20px; padding: 0 2px; border: 1px solid #bcbcbc; line-height: 18px; white-space: nowrap; overflow: hidden; }
.items th { background: #dfe3e8; font-weight: normal; text-align: center; color: #444; }
.items th svg { margin: auto; }
.items .num { text-align: right; }
.items .drop { padding-right: 14px; background: #dfe3e8 url("data:image/svg+xml,%3Csvg xmlns='http://www.w3.org/2000/svg' width='13' height='5'%3E%3Cpath d='M1 1h6L4 4z' fill='%23333'/%3E%3C/svg%3E") no-repeat right center; }
.items .current td { background: #a3cef1; color: #000; }
.items .current td:nth-child(2) { background: #fff; }
.items .new td, .items .new th { border-bottom-width: 2px; }
.items tfoot td { font-weight: bold; }
.c-sel { width: 20px; }
.c-art { width: 154px; }
.c-desc { width: 451px; }
.c-note { width: 327px; }
.c-qty { width: 100px; }
.c-cur { width: 52px; }
.c-price { width: 90px; }
.c-unit { width: 54px; }

.scrollbar { width: 19px; padding: 2px 3px 2px 1px; display: flex; flex-direction: column; background: #f1f1f1; border-right: 1px solid #aaa; }
.arrow { height: 15px; border: 1px solid #ababab; background: #fff; display: grid; place-items: center; }
.arrow::before { content: ""; border: 4px solid transparent; }
.up::before { border-top: 0; border-bottom-color: #666; }
.down::before { border-bottom: 0; border-top-color: #666; }
.down { margin-top: auto; }
.thumb { height: 56%; border: 1px solid #ababab; background: #fff; }

/* record navigator */
.records { display: flex; align-items: center; height: 21px; flex: none; padding-left: 5px; border-top: 1px solid #a5a9b0; border-bottom: 1px solid #fff; background: linear-gradient(#f4f5f7 50%, #e6e8eb 50%); font: 11px/16px "Open Sans", sans-serif; color: #444; }
.records span { margin-right: 5px; color: #3c4a60; }
.r-prev { margin: 0 4px 0 8px; }
.records input { height: 16px; color: #000; padding-left: 2px; }
.records .pos { width: 50px; }
.r-next { margin: 0 8px 0 6px; }
.r-new { margin-left: 4px; }
.sep { width: 2px; height: 18px; margin: 0 5px; background: #b8bcc4; }
.nofilter { margin: 0 2px; color: #aaa; gap: 2px; }
.records .find { width: 70px; }
.corner { align-self: stretch; width: 19px; margin-left: auto; background: #c5c7cc; }
.status { display: flex; justify-content: space-between; height: 22px; flex: none; padding: 0 15px 0 8px; background: #a4373a; color: #fff; font: 11px/21px "Open Sans", sans-serif; }
.status span:first-child { font-weight: 600; }

/* taskbar */
.taskbar { display: flex; height: 40px; flex: none; background: linear-gradient(90deg, #1b2f31, #2b3b3e 50%, #26373a); color: #fff; font: 12px/18px "Open Sans", "Noto Sans CJK TC", sans-serif; }
.start { width: 48px; justify-content: center; }
.search { width: 288px; display: flex; align-items: center; padding: 0 3px 0 12px; background: #f1f1f1; border: 1px solid #c8c8c8; }
.search input { flex: 1; margin-left: 8px; border: 0; background: none; color: #333; font-size: 14px; height: 24px; }
.doodle { align-self: end; }
.apps { display: flex; }
.apps button { width: 49px; justify-content: center; position: relative; }
.apps .open::after { content: ""; position: absolute; left: 5px; right: 4px; bottom: 0; height: 2px; background: #ffaec9; }
.apps .a { font: bold 11px "Open Sans", sans-serif; fill: #fff; }
.tray { display: flex; align-items: center; margin-left: auto; padding-right: 24px; }
.weather { font-size: 14px; margin-left: 8px; }
.cjk { margin-left: 10px; }
.indicators { display: flex; gap: 9px; margin-left: 22px; }
.clock { display: grid; text-align: center; margin: 0 15px 0 6px; }
```
